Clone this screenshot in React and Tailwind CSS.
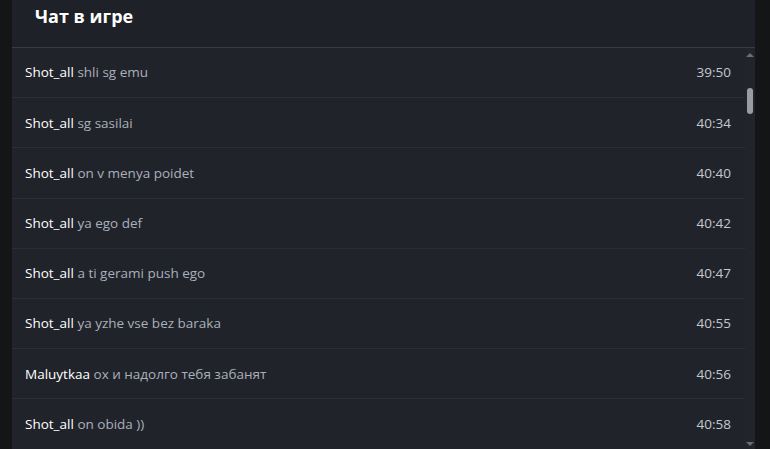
import React from "react";

const rows = [
  { user: "Shot_all", msg: "shli sg emu", time: "39:50" },
  { user: "Shot_all", msg: "sg sasilai", time: "40:34" },
  { user: "Shot_all", msg: "on v menya poidet", time: "40:40" },
  { user: "Shot_all", msg: "ya ego def", time: "40:42" },
  { user: "Shot_all", msg: "a ti gerami push ego", time: "40:47" },
  { user: "Shot_all", msg: "ya yzhe vse bez baraka", time: "40:55" },
  { user: "Maluytkaa", msg: "ох и надолго тебя забанят", time: "40:56" },
  { user: "Shot_all", msg: "on obida ))", time: "40:58" },
];

export default function App() {
  return (
    <div
      className="w-[770px] h-[449px] bg-[#141517] flex pl-[12px] pr-[15px] overflow-hidden"
      style={{ fontFamily: '"Open Sans", "Noto Sans", sans-serif' }}
    >
      <div className="flex-1 flex flex-col bg-[#1f2128] min-w-0">
        <div className="h-[48px] shrink-0 border-b border-[#393b42] pl-[23px] pt-[2px]">
          <h1 className="text-[18px] font-bold text-white leading-[28px]">Чат в игре</h1>
        </div>
        <div className="flex-1 flex min-h-0">
          <div className="flex-1 flex flex-col overflow-hidden bg-[#21232a]">
            {rows.map((r, i) => (
              <div
                key={i}
                className="h-[50.2px] shrink-0 border-b border-[#2c2e35] flex items-center justify-between pl-[13px] pr-[14px] text-[13.5px]"
              >
                <div>
                  <span className="text-white">{r.user}</span>{" "}
                  <span className="text-[#a9b0bb]">{r.msg}</span>
                </div>
                <span className="text-[#c3c8d0]">{r.time}</span>
              </div>
            ))}
          </div>
          <div className="w-[10px] shrink-0 bg-[#22242a] flex flex-col items-center">
            <div className="mt-[5px] w-0 h-0 border-l-[4px] border-r-[4px] border-b-[4px] border-l-transparent border-r-transparent border-b-[#6b6d73]" />
            <div className="mt-[31px] w-[6px] h-[26px] rounded-[3px] bg-[#9a9ca3]" />
            <div className="flex-1" />
            <div className="mb-[3px] w-0 h-0 border-l-[4px] border-r-[4px] border-t-[4px] border-l-transparent border-r-transparent border-t-[#6b6d73]" />
          </div>
        </div>
      </div>
    </div>
  );
}
